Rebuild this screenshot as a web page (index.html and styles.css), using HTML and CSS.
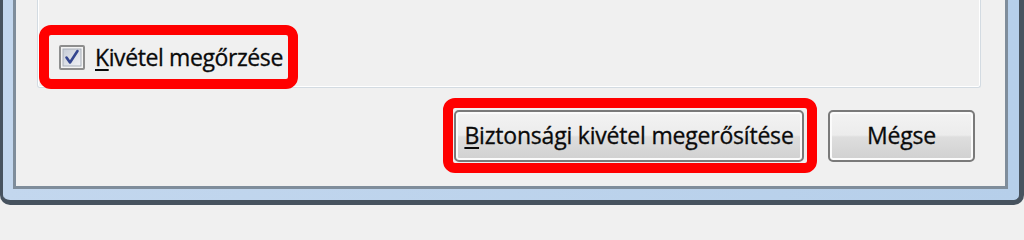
FILE: index.html
```html
<!DOCTYPE html>
<html lang="hu">
<head>
<meta charset="utf-8">
<title>Biztonsági kivétel</title>
<link rel="stylesheet" href="styles.css">
</head>
<body>
<div class="win">
  <div class="client">
    <div class="groupbox">
      <label class="check-row">
        <svg class="checkbox" width="26" height="25" viewBox="0 0 26 25">
          <defs>
            <linearGradient id="cbg" x1="0" y1="0" x2="1" y2="1">
              <stop offset="0" stop-color="#c6ccd6"/>
              <stop offset="1" stop-color="#f1f2f6"/>
            </linearGradient>
          </defs>
          <rect x="1" y="1" width="24" height="23" rx="1" fill="#f4f4f4" stroke="#8e8e8e" stroke-width="2"/>
          <rect x="4" y="4" width="18" height="17" fill="url(#cbg)" stroke="#a9b0ba" stroke-width="1"/>
          <path d="M7.5 12.5 L11 17.5 L18.5 6" fill="none" stroke="#34468f" stroke-width="2.6" stroke-linecap="round" stroke-linejoin="round"/>
        </svg>
        <span class="label"><u>K</u>ivétel megőrzése</span>
      </label>
    </div>
    <div class="buttons">
      <span class="highlight">
        <button class="btn btn-primary" type="button"><u>B</u>iztonsági kivétel megerősítése</button>
      </span>
      <button class="btn btn-cancel" type="button">Mégse</button>
    </div>
  </div>
</div>
</body>
</html>
```
FILE: styles.css
```css
html, body {
  margin: 0;
  padding: 0;
  width: 1024px;
  height: 205px;
  overflow: hidden;
  background: #f0f0f0;
}

.win {
  box-sizing: border-box;
  width: 1024px;
  height: 205px;
  border-style: solid;
  border-color: #47535f;
  border-width: 0 5px 5px 3px;
  border-radius: 0 0 10px 10px;
  background: linear-gradient(90deg, #c3d7ee 0, #b6cfea 100%);
  padding: 0 11px 11px 10px;
  font-family: "Open Sans", "Noto Sans", "Liberation Sans", sans-serif;
  color: #0a0a0a;
}

.client {
  box-sizing: border-box;
  height: 100%;
  background: #f0f0f0;
  border: 3px solid #7f8d9b;
  border-top: none;
  display: flex;
  flex-direction: column;
}

.groupbox {
  box-sizing: border-box;
  margin: 0 24px 0 21px;
  height: 88px;
  border: 1px solid #d3dbe2;
  border-top: none;
  border-radius: 0 0 3px 3px;
  box-shadow: inset 1px 0 0 #ffffff, inset -1px 0 0 #ffffff, inset 0 -1px 0 #ffffff;
  padding: 35px 0 0 11px;
}

.check-row {
  display: flex;
  align-items: center;
  box-sizing: border-box;
  width: 239px;
  height: 44px;
  padding: 0 0 0 10px;
  outline: 10px solid #ff0000;
  border-radius: 2px;
}

.checkbox {
  flex: none;
}

.label {
  margin-left: 10px;
  font-size: 23px;
  letter-spacing: -0.4px;
  white-space: nowrap;
  line-height: 1;
  -webkit-text-stroke: 0.3px #0a0a0a;
}

.label u, .btn u {
  text-decoration-thickness: 2px;
  text-underline-offset: 3px;
}

.buttons {
  display: flex;
  justify-content: flex-end;
  align-items: flex-start;
  gap: 21px;
  margin-top: 20px;
  padding-right: 30px;
}

.highlight {
  display: block;
  padding: 2px 3px 1px 1px;
  outline: 10px solid #ff0000;
  border-radius: 2px;
}

.btn {
  display: block;
  box-sizing: border-box;
  height: 52px;
  border: 2px solid #7a7a7a;
  border-radius: 5px;
  background: linear-gradient(180deg, #f3f3f3 0%, #ececec 48%, #dedede 52%, #d0d0d0 100%);
  box-shadow: inset 0 0 0 2px #fbfbfb;
  font-family: "Open Sans", "Noto Sans", "Liberation Sans", sans-serif;
  font-size: 23px;
  letter-spacing: -0.2px;
  color: #0a0a0a;
  -webkit-text-stroke: 0.3px #0a0a0a;
  padding: 0 0 2px 0;
  text-align: center;
  white-space: nowrap;
}

.btn-primary {
  width: 350px;
}

.btn-cancel {
  width: 147px;
  margin-top: 2px;
}
```
